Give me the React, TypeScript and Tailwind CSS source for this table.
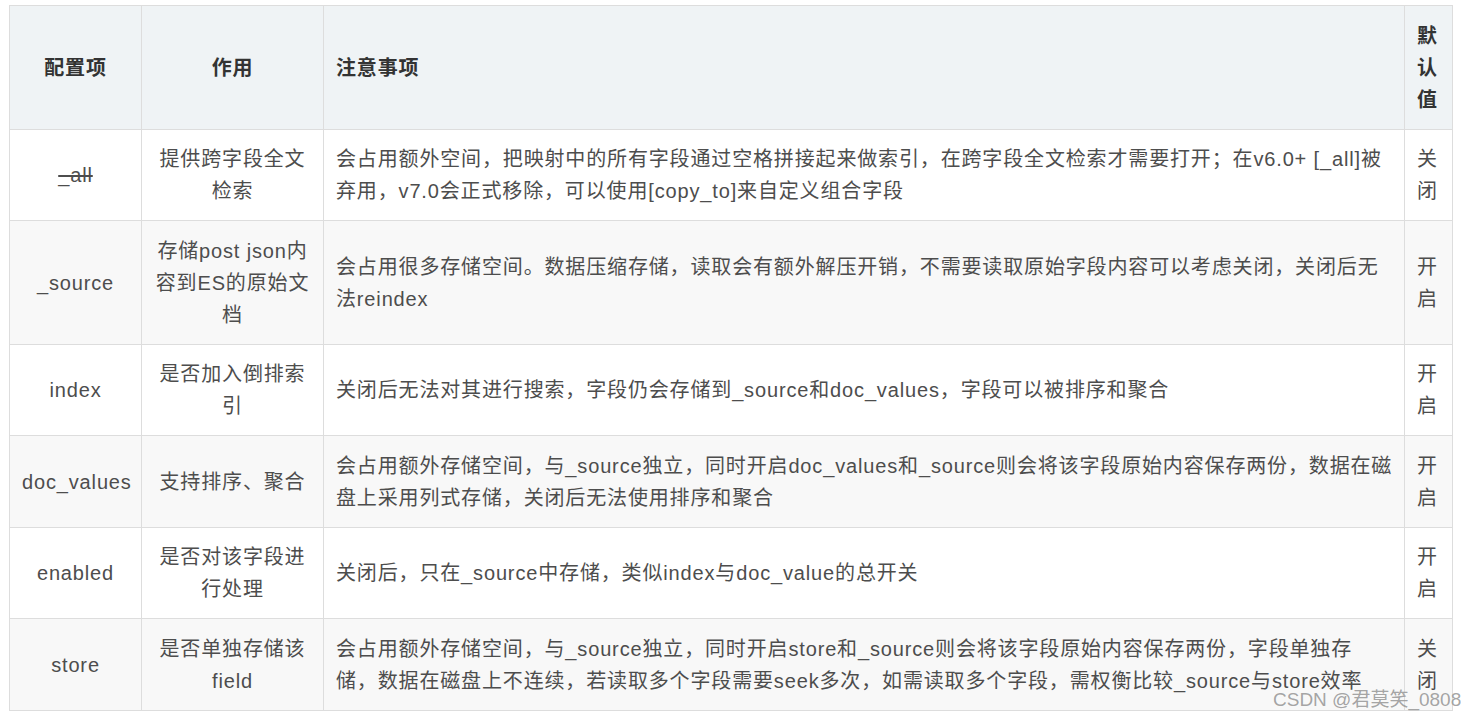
import React from 'react';

type Row = { key: React.ReactNode; use: string[]; note: string[]; def: string[] };

const rows: Row[] = [
  {
    key: <del className="decoration-[#4d4d4d]">_all</del>,
    use: ['提供跨字段全文', '检索'],
    note: [
      '会占用额外空间，把映射中的所有字段通过空格拼接起来做索引，在跨字段全文检索才需要打开；在v6.0+ [_all]被',
      '弃用，v7.0会正式移除，可以使用[copy_to]来自定义组合字段',
    ],
    def: ['关', '闭'],
  },
  {
    key: '_source',
    use: ['存储post json内', '容到ES的原始文', '档'],
    note: [
      '会占用很多存储空间。数据压缩存储，读取会有额外解压开销，不需要读取原始字段内容可以考虑关闭，关闭后无',
      '法reindex',
    ],
    def: ['开', '启'],
  },
  {
    key: 'index',
    use: ['是否加入倒排索', '引'],
    note: ['关闭后无法对其进行搜索，字段仍会存储到_source和doc_values，字段可以被排序和聚合'],
    def: ['开', '启'],
  },
  {
    key: 'doc_values',
    use: ['支持排序、聚合'],
    note: [
      '会占用额外存储空间，与_source独立，同时开启doc_values和_source则会将该字段原始内容保存两份，数据在磁',
      '盘上采用列式存储，关闭后无法使用排序和聚合',
    ],
    def: ['开', '启'],
  },
  {
    key: 'enabled',
    use: ['是否对该字段进', '行处理'],
    note: ['关闭后，只在_source中存储，类似index与doc_value的总开关'],
    def: ['开', '启'],
  },
  {
    key: 'store',
    use: ['是否单独存储该', 'field'],
    note: [
      '会占用额外存储空间，与_source独立，同时开启store和_source则会将该字段原始内容保存两份，字段单独存',
      '储，数据在磁盘上不连续，若读取多个字段需要seek多次，如需读取多个字段，需权衡比较_source与store效率',
    ],
    def: ['关', '闭'],
  },
];

const cell = 'border border-[#dddddd] px-3 pt-[13.5px] pb-[13px] align-middle';

const Lines: React.FC<{ lines: string[] }> = ({ lines }) => (
  <>
    {lines.map((l, i) => (
      <div key={i} className="whitespace-nowrap">
        {l}
      </div>
    ))}
  </>
);

const App: React.FC = () => {
  return (
    <div
      className="relative h-[721px] w-[1478px] overflow-hidden bg-white pl-[9px] pt-[5px] text-[20px] leading-[32px] tracking-[0.85px] text-[#4d4d4d]"
      style={{ fontFamily: '"Liberation Sans", Arial, "Noto Sans CJK SC", sans-serif' }}
    >
      <table className="w-[1443px] table-fixed border-collapse border border-[#dddddd]">
        <colgroup>
          <col className="w-[132px]" />
          <col className="w-[182px]" />
          <col className="w-[1081px]" />
          <col className="w-[48px]" />
        </colgroup>
        <thead>
          <tr className="bg-[#eff3f5] font-bold text-[#333333]">
            <th className={`${cell} text-center`}>配置项</th>
            <th className={`${cell} text-center`}>作用</th>
            <th className={`${cell} text-left`}>注意事项</th>
            <th className={`${cell} text-left`}>
              <Lines lines={['默', '认', '值']} />
            </th>
          </tr>
        </thead>
        <tbody>
          {rows.map((r, i) => (
            <tr key={i} className={i % 2 === 1 ? 'bg-[#f8f8f8]' : 'bg-white'}>
              <td className={`${cell} text-center`}>{r.key}</td>
              <td className={`${cell} text-center`}>
                <Lines lines={r.use} />
              </td>
              <td className={`${cell} text-left`}>
                <Lines lines={r.note} />
              </td>
              <td className={`${cell} text-left`}>
                <Lines lines={r.def} />
              </td>
            </tr>
          ))}
        </tbody>
      </table>

      {/* watermark */}
      <div className="absolute left-[1273px] top-[686px] text-[19px] leading-[28px] tracking-normal text-[#9a9a9a]/90">
        CSDN @君莫笑_0808
      </div>
    </div>
  );
};

export default App;
